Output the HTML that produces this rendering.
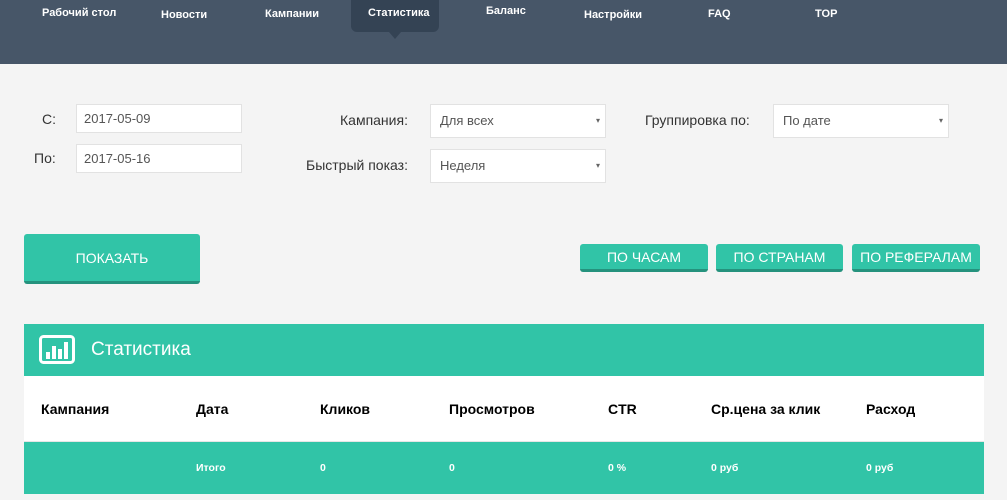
<!DOCTYPE html>
<html><head><meta charset="utf-8"><style>
*{margin:0;padding:0;box-sizing:border-box}
body{width:1007px;height:500px;background:#f4f4f4;font-family:"Liberation Sans","Noto Sans CJK SC",sans-serif;position:relative;overflow:hidden}
.nav{position:absolute;left:0;top:0;width:1007px;height:64px;background:#475668}
.nav span{position:absolute;color:#fff;font-size:11px;font-weight:bold}
.act{position:absolute;left:351px;top:0;width:88px;height:32px;background:#344354;border-radius:0 0 6px 6px}
.tri{position:absolute;left:389px;top:32px;border-left:6px solid transparent;border-right:6px solid transparent;border-top:7px solid #344354}
.lbl{position:absolute;font-size:14px;color:#333}
.inp{position:absolute;background:#fff;border:1px solid #e2e2e2;font-size:13px;color:#555;padding-left:7px;line-height:28px}
.sel{position:absolute;background:#fff;border:1px solid #e2e2e2;font-size:13px;color:#555;padding-left:9px}
.sel:after{content:"▾";position:absolute;right:5px;top:0;font-size:8px;color:#666}
.btn{position:absolute;background:#31c4a7;border-bottom:3px solid #25927d;border-radius:3px;color:#fff;text-align:center;font-size:14px}
.th{position:absolute;top:401px;font-size:14px;font-weight:bold;color:#000}
.td{position:absolute;top:462px;font-size:10.5px;font-weight:bold;color:#fff}
</style></head><body>
<div class="nav">
<div class="act"></div><div class="tri"></div>
<span style="left:42px;top:7px">Рабочий стол</span>
<span style="left:161px;top:9px">Новости</span>
<span style="left:265px;top:8px">Кампании</span>
<span style="left:368px;top:7px">Статистика</span>
<span style="left:486px;top:5px">Баланс</span>
<span style="left:584px;top:9px">Настройки</span>
<span style="left:708px;top:8px">FAQ</span>
<span style="left:815px;top:8px">TOP</span>
</div>
<div class="lbl" style="left:42px;top:111px">С:</div>
<div class="lbl" style="left:34px;top:150px">По:</div>
<div class="inp" style="left:76px;top:104px;width:166px;height:29px">2017-05-09</div>
<div class="inp" style="left:76px;top:144px;width:166px;height:29px">2017-05-16</div>
<div class="lbl" style="left:340px;top:112px">Кампания:</div>
<div class="lbl" style="left:306px;top:157px">Быстрый показ:</div>
<div class="lbl" style="left:645px;top:112px">Группировка по:</div>
<div class="sel" style="left:430px;top:104px;width:176px;height:34px;line-height:32px">Для всех</div>
<div class="sel" style="left:430px;top:149px;width:176px;height:34px;line-height:32px">Неделя</div>
<div class="sel" style="left:773px;top:104px;width:176px;height:34px;line-height:32px">По дате</div>
<div class="btn" style="left:24px;top:234px;width:176px;height:50px;line-height:49px">ПОКАЗАТЬ</div>
<div class="btn" style="left:580px;top:244px;width:128px;height:28px;line-height:27px">ПО ЧАСАМ</div>
<div class="btn" style="left:716px;top:244px;width:127px;height:28px;line-height:27px">ПО СТРАНАМ</div>
<div class="btn" style="left:852px;top:244px;width:128px;height:28px;line-height:27px">ПО РЕФЕРАЛАМ</div>
<div style="position:absolute;left:24px;top:324px;width:960px;height:52px;background:#31c4a7"></div>
<svg style="position:absolute;left:39px;top:335px" width="36" height="29" viewBox="0 0 36 29"><rect x="1.5" y="1.5" width="33" height="26" rx="3" fill="none" stroke="#fff" stroke-width="3"/><rect x="7" y="17" width="4" height="7" fill="#fff"/><rect x="13" y="11" width="4" height="13" fill="#fff"/><rect x="19" y="14" width="4" height="10" fill="#fff"/><rect x="25" y="7" width="4" height="17" fill="#fff"/></svg>
<div style="position:absolute;left:91px;top:339px;color:#fff;font-size:19px">Статистика</div>
<div style="position:absolute;left:24px;top:376px;width:960px;height:66px;background:#fff;border-bottom:1px solid #e6e6e6"></div>
<div style="position:absolute;left:24px;top:442px;width:960px;height:52px;background:#31c4a7"></div>
<div class="th" style="left:41px">Кампания</div>
<div class="th" style="left:196px">Дата</div>
<div class="th" style="left:320px">Кликов</div>
<div class="th" style="left:449px">Просмотров</div>
<div class="th" style="left:608px">CTR</div>
<div class="th" style="left:711px">Ср.цена за клик</div>
<div class="th" style="left:866px">Расход</div>
<div class="td" style="left:196px">Итого</div>
<div class="td" style="left:320px">0</div>
<div class="td" style="left:449px">0</div>
<div class="td" style="left:608px">0 %</div>
<div class="td" style="left:711px">0 руб</div>
<div class="td" style="left:866px">0 руб</div>
</body></html>
